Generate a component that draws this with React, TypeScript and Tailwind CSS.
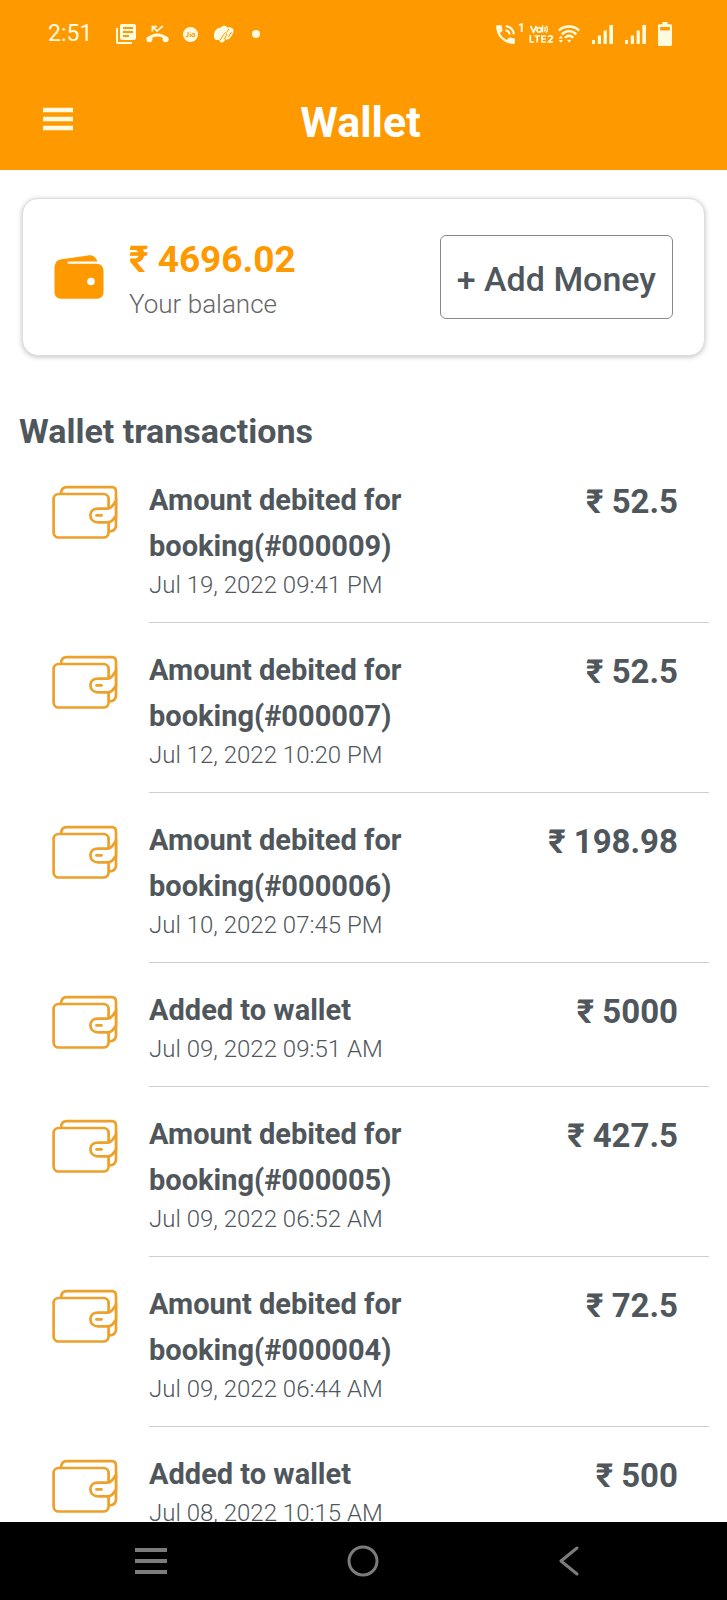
import React from 'react';
import { MdLibraryBooks, MdPhoneInTalk } from 'react-icons/md';

interface Transaction {
  id: number;
  title: string;
  date: string;
  amount: string;
}

const transactions: Transaction[] = [
  { id: 1, title: 'Amount debited for booking(#000009)', date: 'Jul 19, 2022 09:41 PM', amount: '52.5' },
  { id: 2, title: 'Amount debited for booking(#000007)', date: 'Jul 12, 2022 10:20 PM', amount: '52.5' },
  { id: 3, title: 'Amount debited for booking(#000006)', date: 'Jul 10, 2022 07:45 PM', amount: '198.98' },
  { id: 4, title: 'Added to wallet', date: 'Jul 09, 2022 09:51 AM', amount: '5000' },
  { id: 5, title: 'Amount debited for booking(#000005)', date: 'Jul 09, 2022 06:52 AM', amount: '427.5' },
  { id: 6, title: 'Amount debited for booking(#000004)', date: 'Jul 09, 2022 06:44 AM', amount: '72.5' },
  { id: 7, title: 'Added to wallet', date: 'Jul 08, 2022 10:15 AM', amount: '500' },
];

const MissedCallIcon = () => (
  <svg width="23" height="20" viewBox="0 0 23 20" fill="none" aria-hidden="true">
    <path d="M2.5 15C7 9.6 16 9.6 20.5 15" stroke="currentColor" strokeWidth="3" />
    <circle cx="3.4" cy="15.2" r="3" fill="currentColor" />
    <circle cx="19.6" cy="15.2" r="3" fill="currentColor" />
    <path d="M6.4 7.4V2.6H11M6.8 3L11 7.2L16.8 2" stroke="currentColor" strokeWidth="1.7" />
  </svg>
);

const JioIcon = () => (
  <svg width="15" height="15" viewBox="0 0 15 15" aria-hidden="true">
    <circle cx="7.5" cy="7.5" r="7.5" fill="currentColor" />
    <g stroke="#ff9900" strokeWidth="1.1" fill="none">
      <path d="M5 4.9V8.6C5 9.8 3.4 10 2.9 9" />
      <path d="M7.1 6.7V10M7.1 4.7V5.6" />
      <circle cx="10.3" cy="8.2" r="1.6" />
    </g>
  </svg>
);

const HandsIcon = () => (
  <svg width="22" height="19" viewBox="0 0 22 19" fill="none" aria-hidden="true">
    <path
      d="M1 9.5C1.6 5.4 4.3 2.6 8 2.6C9.2 0 13.4 0 14.3 2.6C17 1.6 20.6 3 20.6 5.6C20.6 8 18.4 11.6 16.6 13.6C15.4 15 13.4 14.7 12.4 14C11.6 16.8 9.6 18.2 7.4 17.2L5.8 14.8C2.4 15.8 0.4 13.6 1 9.5Z"
      fill="currentColor"
    />
    <path
      d="M7 15.4L11.4 8.6C12.6 6.6 14.6 8 13.4 10L11 14.4M13.8 7L16 3.8M15.2 12.2L18.6 6.8"
      stroke="#ff9900"
      strokeWidth="1"
    />
  </svg>
);

const VolteIcon = () => (
  <svg width="25" height="20" viewBox="0 0 25 20" fill="none" stroke="currentColor" aria-hidden="true">
    <g strokeWidth="1.7">
      <path d="M1.5 2L4.5 8L7.5 2" />
      <circle cx="10.2" cy="5.9" r="2.2" />
      <path d="M13.6 1.5V8.5M15.4 3.2C16.6 4.4 16.6 6.2 15.4 7.4M17 1.8C18.8 3.8 18.8 6.8 17 8.8" strokeWidth="1.4" />
    </g>
    <path
      d="M1.3 11V18H5M5.4 12H11M8.2 12V18.6M17 12H13V18H17M13 15H16.6M19.2 13.2C19.4 11.4 23.6 11.4 23.4 13.4C23.3 14.8 20.4 16 19.4 18H24"
      strokeWidth="1.7"
    />
  </svg>
);

const WifiIcon = () => (
  <svg width="22" height="19" viewBox="0 0 22 19" fill="none" aria-hidden="true">
    <g stroke="currentColor" strokeWidth="2.4">
      <path d="M0.8 5.6C6 0.2 16 0.2 21.2 5.6" />
      <path d="M3.8 9.4C8 5 14 5 18.4 9.4" />
      <path d="M7 12.8C9.6 10 12.6 10 15.2 12.8" />
    </g>
    <path d="M9 14.8H13.2L11.1 17.8ZM0.6 13.4L2.8 10.8L5 13.4ZM0.6 15H5L2.8 17.8Z" fill="currentColor" />
  </svg>
);

const SignalIcon = () => (
  <svg width="21" height="19" viewBox="0 0 21 19" fill="currentColor" aria-hidden="true">
    <path d="M0 15H3V19H0ZM5.8 10.5H9V19H5.8ZM11.6 5.5H14.8V19H11.6ZM17.4 0H21V19H17.4Z" />
  </svg>
);

const BatteryIcon = () => (
  <svg width="14" height="24" viewBox="0 0 14 24" fill="currentColor" aria-hidden="true">
    <path
      fillRule="evenodd"
      d="M4.5 0H9.5V2.2H12.5C13.4 2.2 14 2.8 14 3.7V22.5C14 23.4 13.4 24 12.5 24H1.5C0.6 24 0 23.4 0 22.5V3.7C0 2.8 0.6 2.2 1.5 2.2H4.5ZM2.2 5V8.6H11.8V5Z"
    />
  </svg>
);

const WalletSolidIcon = () => (
  <svg width="50" height="44" viewBox="0 0 50 44" fill="#ff9900" className="shrink-0" aria-hidden="true">
    <path d="M1.5 8.4C2.4 5.6 4.6 4.8 7.5 4.3L34 0.4C37.5 -0.2 41.5 1 43.4 6.4H15C12.6 6.4 12.6 8.8 15 8.8H42C47 8.8 49.5 11.6 49.5 16V36.5C49.5 41.5 47 43.8 42 43.8H8C3 43.8 0.5 41.5 0.5 36.5V13C0.5 11 0.8 9.6 1.5 8.4Z" />
    <circle cx="37" cy="26.5" r="3.8" fill="#fff" />
  </svg>
);

const WalletOutlineIcon = () => (
  <svg width="66" height="54" viewBox="0 0 66 54" fill="none" stroke="#eda02a" strokeWidth="2.7" className="shrink-0" aria-hidden="true">
    <rect x="1.6" y="9" width="55" height="43.5" rx="5" />
    <path d="M9 9C9 4.5 11 2.2 15 2.2H60C63 2.2 64 4 64 7V40C64 44 62 46.4 57 46.4" />
    <path d="M57 23.6H46C41 23.6 38.4 26.6 38.4 30.2C38.4 34.4 41.6 37.4 46 37.4H57" fill="#fff" />
    <path d="M56 23.6C61 23 61.5 18 64 16V30.5C62 34 60 37.4 56 37.4" fill="#fff" />
    <path d="M44.5 30.4H49.5" strokeLinecap="round" />
  </svg>
);

const StatusBar = () => (
  <div className="flex h-16 items-center justify-between pl-12 pr-[55px] pt-1 text-[#fffbe0]">
    <div className="flex items-center">
      <span className="mr-[22px] text-[23px] leading-6">2:51</span>
      <MdLibraryBooks size={24} className="mr-2" />
      <MissedCallIcon />
      <span className="ml-[14px] mr-[15px]"><JioIcon /></span>
      <HandsIcon />
      <span className="ml-[17px] h-2 w-2 rounded-full bg-current" />
    </div>
    <div className="flex items-center">
      <MdPhoneInTalk size={25} />
      <span className="-mt-3 mr-1 text-xs leading-3 font-bold">1</span>
      <VolteIcon />
      <span className="ml-1 mr-3"><WifiIcon /></span>
      <SignalIcon />
      <span className="mx-3"><SignalIcon /></span>
      <BatteryIcon />
    </div>
  </div>
);

const BalanceCard = () => (
  <section className="mx-[22px] mt-7 flex items-center justify-between rounded-2xl border border-[#dedede] bg-white px-[31px] py-[33px] shadow-[0_1px_5px_rgba(0,0,0,0.25)]">
    <div className="flex items-center gap-[25px]">
      <WalletSolidIcon />
      <div className="pt-[6px]">
        <p className="text-[37px] leading-[44px] font-bold text-[#ff9900]">₹ 4696.02</p>
        <p className="pt-1 text-[26px] leading-9 font-light text-[#666]">Your balance</p>
      </div>
    </div>
    <button className="rounded-md border border-[#85898c] px-4 pt-[22px] pb-[18px] text-[34px] leading-[42px] font-medium text-[#50575c]">
      + Add Money
    </button>
  </section>
);

const TransactionRow: React.FC<{ item: Transaction }> = ({ item }) => (
  <li className="flex items-start pl-[52px] pr-[18px]">
    <div className="w-[97px] shrink-0 pt-8">
      <WalletOutlineIcon />
    </div>
    <div className="flex flex-1 items-start justify-between border-b border-[#cfcfcf] pt-6 pb-[21px] pr-[31px]">
      <div className="w-[290px]">
        <h3 className="text-[29px] leading-[46px] font-bold">{item.title}</h3>
        <p className="text-[24px] leading-8 font-light">{item.date}</p>
      </div>
      <p className="pt-[2px] text-[33px] leading-[46px] font-bold">₹ {item.amount}</p>
    </div>
  </li>
);

const BottomNav = () => (
  <nav className="flex h-[78px] shrink-0 items-center justify-around bg-black pl-11 pr-[58px] text-[#7c7c7c]">
    <button aria-label="Recent apps">
      <svg width="34" height="28" viewBox="0 0 34 28" stroke="currentColor" strokeWidth="4">
        <path d="M1 3H33M1 14H33M1 25H33" />
      </svg>
    </button>
    <button aria-label="Home">
      <svg width="32" height="32" viewBox="0 0 32 32" fill="none" stroke="currentColor" strokeWidth="3">
        <circle cx="16" cy="16" r="14" />
      </svg>
    </button>
    <button aria-label="Back">
      <svg width="20" height="30" viewBox="0 0 20 30" fill="none" stroke="currentColor" strokeWidth="3" strokeLinecap="round" strokeLinejoin="round">
        <path d="M18 2L2 15L18 28" />
      </svg>
    </button>
  </nav>
);

export default function App() {
  return (
    <div className="flex h-screen flex-col bg-white font-['Roboto',sans-serif] text-[#50575c]">
      <header className="shrink-0 bg-[#ff9900]">
        <StatusBar />
        <div className="grid h-[106px] grid-cols-3 items-start pl-[43px] pr-[49px] pt-8">
          <button aria-label="Open menu" className="justify-self-start pt-[11px] text-[#fffbe0]">
            <svg width="30" height="24" viewBox="0 0 30 24" stroke="currentColor" strokeWidth="4.4">
              <path d="M0 3H30M0 12H30M0 21H30" />
            </svg>
          </button>
          <h1 className="text-center text-[43px] leading-[52px] font-bold text-white">Wallet</h1>
        </div>
      </header>

      <main className="min-h-0 flex-1 overflow-y-auto [scrollbar-width:none]">
        <BalanceCard />
        <h2 className="mt-[53px] px-[19px] text-[34px] leading-[44px] font-bold">Wallet transactions</h2>
        <ul>
          {transactions.map((item) => (
            <TransactionRow key={item.id} item={item} />
          ))}
        </ul>
      </main>

      <BottomNav />
    </div>
  );
}
